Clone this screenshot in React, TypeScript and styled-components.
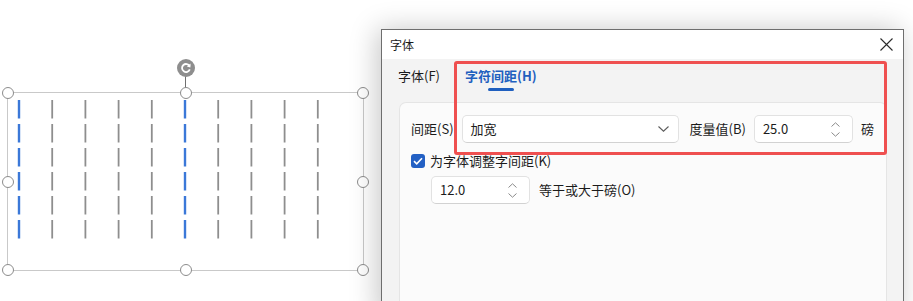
import React from 'react';
import styled, { createGlobalStyle } from 'styled-components';

const Global = createGlobalStyle`
  html, body { margin: 0; padding: 0; background: #ffffff; }
  body { font-family: "Noto Sans CJK SC", "Noto Sans", sans-serif; color: #1b1b1b; }
  * { box-sizing: border-box; }
`;

const Page = styled.div`
  width: 913px;
  height: 301px;
  overflow: hidden;
  display: flex;
  align-items: flex-start;
`;

/* ---------- canvas with selected text box ---------- */
const Canvas = styled.div`
  flex: none;
  width: 381px;
  height: 301px;
  padding: 92px 0 0 7px;
`;

const SelectionBox = styled.div`
  position: relative;
  width: 357px;
  height: 179px;
  border: 1px solid #c9c9c9;
`;

const Bars = styled.svg`
  display: block;
`;

const Handle = styled.div<{ $x: number; $y: number }>`
  position: absolute;
  width: 12px;
  height: 12px;
  border-radius: 50%;
  background: #fff;
  border: 1px solid #8c8c8c;
  left: calc(${(p) => p.$x * 100}% - 6px);
  top: calc(${(p) => p.$y * 100}% - 6px);
`;

const RotateStem = styled.div`
  position: absolute;
  left: calc(50% - 0.5px);
  top: -17px;
  width: 1px;
  height: 12px;
  background: #6f6f6f;
`;

const RotateKnob = styled.div`
  position: absolute;
  left: calc(50% - 9px);
  top: -34px;
  width: 18px;
  height: 18px;
  border-radius: 50%;
  background: #8e8e8e;
  display: flex;
  align-items: center;
  justify-content: center;
`;

/* ---------- dialog ---------- */
const Dialog = styled.div`
  position: relative;
  flex: none;
  margin-top: 29px;
  width: 523px;
  height: 290px;
  border: 1px solid #6e6e6e;
  background: #f3f3f3;
  box-shadow: -4px 0 26px rgba(0, 0, 0, 0.22);
  display: flex;
  flex-direction: column;
`;

const TitleBar = styled.div`
  flex: none;
  height: 29px;
  background: #ffffff;
  display: flex;
  align-items: center;
  justify-content: space-between;
  padding: 0 10px 0 8px;
  font-size: 12px;
  line-height: 16px;
`;

const Close = styled.svg`
  display: block;
`;

const TabRow = styled.div`
  flex: none;
  height: 43px;
  display: flex;
  align-items: flex-start;
  gap: 25px;
  padding: 8px 0 0 16px;
`;

const Tab = styled.div<{ $active?: boolean }>`
  display: flex;
  flex-direction: column;
  align-items: center;
  font-size: 13px;
  line-height: 18px;
  font-weight: ${(p) => (p.$active ? 700 : 400)};
  color: ${(p) => (p.$active ? '#1f5fbf' : '#1b1b1b')};
`;

const TabLine = styled.div<{ $active?: boolean }>`
  margin-top: 3px;
  width: 26px;
  height: 3px;
  border-radius: 2px;
  background: ${(p) => (p.$active ? '#1f5fbf' : 'transparent')};
`;

const Panel = styled.div`
  flex: 1;
  margin: 0 16px 0 17px;
  background: #fbfbfb;
  border: 1px solid #e5e5e5;
  border-bottom: none;
  border-radius: 7px 7px 0 0;
  padding: 12px 11px;
  display: flex;
  flex-direction: column;
  font-size: 13px;
  line-height: 18px;
`;

const Row = styled.div<{ $top?: number; $indent?: number }>`
  display: flex;
  align-items: center;
  margin-top: ${(p) => p.$top ?? 0}px;
  padding-left: ${(p) => p.$indent ?? 0}px;
`;

const Label = styled.span<{ $gap?: number }>`
  white-space: nowrap;
  margin-right: ${(p) => p.$gap ?? 0}px;
`;

const Field = styled.div<{ $w: number; $h?: number; $gap?: number }>`
  flex: none;
  width: ${(p) => p.$w}px;
  height: ${(p) => p.$h ?? 28}px;
  margin-right: ${(p) => p.$gap ?? 0}px;
  background: #ffffff;
  border: 1px solid #e2e2e2;
  border-bottom-color: #d2d2d2;
  border-radius: 5px;
  display: flex;
  align-items: center;
  justify-content: space-between;
  padding: 0 9px 0 8px;
`;

const Spin = styled.div`
  display: flex;
  flex-direction: column;
  gap: 5px;
  margin-right: 3px;
`;

const Check = styled.div`
  flex: none;
  width: 14px;
  height: 14px;
  border-radius: 3px;
  background: #2360c4;
  display: flex;
  align-items: center;
  justify-content: center;
  margin-right: 5px;
`;

const Highlight = styled.div`
  position: absolute;
  left: 72px;
  top: 31px;
  width: 433px;
  height: 94px;
  border: 3px solid #ef5050;
  border-radius: 3px;
  pointer-events: none;
`;

const COLS = 10;
const ROWS = 6;

const SpinArrows = () => (
  <Spin>
    <svg width="9" height="5" viewBox="0 0 9 5">
      <path d="M0.5 4.5 L4.5 0.8 L8.5 4.5" fill="none" stroke="#8a8a8a" strokeWidth="1" />
    </svg>
    <svg width="9" height="5" viewBox="0 0 9 5">
      <path d="M0.5 0.5 L4.5 4.2 L8.5 0.5" fill="none" stroke="#8a8a8a" strokeWidth="1" />
    </svg>
  </Spin>
);

export default function App() {
  const handles: [number, number][] = [
    [0, 0], [0.5, 0], [1, 0],
    [0, 0.5], [1, 0.5],
    [0, 1], [0.5, 1], [1, 1],
  ];
  return (
    <Page>
      <Global />
      <Canvas>
        <SelectionBox>
          <Bars width="355" height="177" viewBox="0 0 355 177">
            {Array.from({ length: COLS }).map((_, c) =>
              Array.from({ length: ROWS }).map((__, r) => {
                const blue = c === 0 || c === 5;
                const x = 11 + c * 33.2;
                const y = 7 + r * 24;
                return (
                  <line
                    key={`${c}-${r}`}
                    x1={x}
                    x2={x}
                    y1={y}
                    y2={y + 18.5}
                    stroke={blue ? '#3b78d8' : '#8e8e8e'}
                    strokeWidth={blue ? 2.4 : 1.8}
                  />
                );
              })
            )}
          </Bars>
          <RotateStem />
          <RotateKnob>
            <svg width="12" height="12" viewBox="0 0 12 12">
              <path d="M9.6 4.2 A4 4 0 1 0 9.8 7.4" fill="none" stroke="#fff" strokeWidth="1.8" />
              <path d="M10.6 1.6 L10.4 5.4 L6.8 4.6 Z" fill="#fff" />
            </svg>
          </RotateKnob>
          {handles.map(([x, y]) => (
            <Handle key={`${x}-${y}`} $x={x} $y={y} />
          ))}
        </SelectionBox>
      </Canvas>

      <Dialog>
        <TitleBar>
          <span>字体</span>
          <Close width="13" height="13" viewBox="0 0 13 13">
            <path d="M0.5 0.5 L12.5 12.5 M12.5 0.5 L0.5 12.5" stroke="#2b2b2b" strokeWidth="1.1" />
          </Close>
        </TitleBar>
        <TabRow>
          <Tab>
            字体(F)
            <TabLine />
          </Tab>
          <Tab $active>
            字符间距(H)
            <TabLine $active />
          </Tab>
        </TabRow>
        <Panel>
          <Row>
            <Label $gap={8}>间距(S)</Label>
            <Field $w={217} $gap={11}>
              <span>加宽</span>
              <svg width="11" height="6" viewBox="0 0 11 6">
                <path d="M0.5 0.5 L5.5 5.2 L10.5 0.5" fill="none" stroke="#5c5c5c" strokeWidth="1.1" />
              </svg>
            </Field>
            <Label $gap={8}>度量值(B)</Label>
            <Field $w={99} $gap={8}>
              <span>25.0</span>
              <SpinArrows />
            </Field>
            <Label>磅</Label>
          </Row>
          <Row $top={9}>
            <Check>
              <svg width="10" height="8" viewBox="0 0 10 8">
                <path d="M1 4.2 L3.7 6.8 L9 1.2" fill="none" stroke="#fff" strokeWidth="1.6" />
              </svg>
            </Check>
            <Label>为字体调整字间距(K)</Label>
          </Row>
          <Row $top={6} $indent={20}>
            <Field $w={99} $h={28} $gap={9}>
              <span>12.0</span>
              <SpinArrows />
            </Field>
            <Label>等于或大于磅(O)</Label>
          </Row>
        </Panel>
        <Highlight />
      </Dialog>
    </Page>
  );
}
